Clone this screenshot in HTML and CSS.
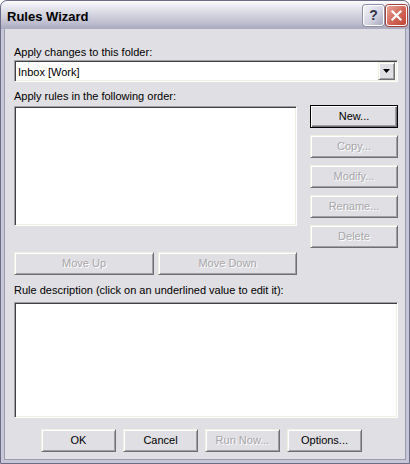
FILE: index.html
```html
<!DOCTYPE html>
<html>
<head>
<meta charset="utf-8">
<link rel="stylesheet" href="styles.css">
</head>
<body>
<div class="window">
  <div class="titlebar">
    <span class="title">Rules Wizard</span>
    <div class="caption-btns">
      <div class="cbtn help">?</div>
      <div class="cbtn close">
        <svg width="19" height="19" viewBox="0 0 19 19"><path d="M5.5 5.5 L13.5 13.5 M13.5 5.5 L5.5 13.5" stroke="#fff" stroke-width="2.2" stroke-linecap="square"/></svg>
      </div>
    </div>
  </div>
  <div class="client">
    <div class="label l1">Apply changes to this folder:</div>
    <div class="combo sunken">
      <span class="combo-text">Inbox [Work]</span>
      <div class="combo-btn">
        <svg width="7" height="4" viewBox="0 0 7 4"><path d="M0 0 H7 L3.5 4 Z" fill="#000"/></svg>
      </div>
    </div>
    <div class="label l2">Apply rules in the following order:</div>
    <div class="main">
      <div class="left">
        <div class="listbox sunken"></div>
        <div class="move-row">
          <div class="btn disabled move-up">Move Up</div>
          <div class="btn disabled move-down">Move Down</div>
        </div>
      </div>
      <div class="right-col">
        <div class="btn default">New...</div>
        <div class="btn disabled">Copy...</div>
        <div class="btn disabled">Modify...</div>
        <div class="btn disabled">Rename...</div>
        <div class="btn disabled">Delete</div>
      </div>
    </div>
    <div class="label l3">Rule description (click on an underlined value to edit it):</div>
    <div class="desc sunken"></div>
    <div class="bottom-row">
      <div class="btn wide">OK</div>
      <div class="btn wide">Cancel</div>
      <div class="btn wide disabled">Run Now...</div>
      <div class="btn wide">Options...</div>
    </div>
  </div>
</div>
</body>
</html>
```
FILE: styles.css
```css
html, body {
  margin: 0;
  padding: 0;
  background: #ffffff;
}
body {
  font-family: "Liberation Sans", Arial, sans-serif;
  font-size: 11px;
  color: #000;
}
.window {
  width: 410px;
  height: 464px;
  box-sizing: border-box;
  border: 1px solid #6c6c88;
  border-radius: 7px 7px 0 0;
  background: #c6c6d6;
  display: flex;
  flex-direction: column;
  overflow: hidden;
}
.titlebar {
  height: 28px;
  flex: none;
  display: flex;
  align-items: flex-start;
  background: linear-gradient(to bottom, #ffffff 0%, #f4f4f8 8%, #e2e2ea 30%, #cfcfdc 55%, #bdbdce 80%, #a9a9bf 100%);
  border-radius: 6px 6px 0 0;
}
.title {
  font-weight: bold;
  font-size: 13px;
  line-height: 15px;
  padding: 8px 0 0 6px;
  color: #000;
}
.caption-btns {
  margin-left: auto;
  display: flex;
  gap: 2px;
  padding: 4px 2px 0 0;
}
.cbtn {
  width: 21px;
  height: 21px;
  box-sizing: border-box;
  border: 1px solid #ffffff;
  border-radius: 3px;
  display: flex;
  align-items: center;
  justify-content: center;
}
.help {
  background: linear-gradient(to bottom right, #f4f4f9 0%, #d4d4e2 55%, #a9a9c0 100%);
  box-shadow: 0 0 0 1px #8e8ea8;
  color: #333347;
  font-weight: bold;
  font-size: 14px;
  line-height: 19px;
}
.close {
  background: linear-gradient(to bottom right, #e8a49c 0%, #d46a5c 50%, #c04434 100%);
  box-shadow: 0 0 0 1px #a0443c;
}
.client {
  flex: 1;
  margin: 0 3px 3px 3px;
  background: #e0dfe3;
  padding: 17px 8px 0 10px;
  box-shadow: inset 1px 0 0 #9b9bb0, inset -1px 0 0 #9b9bb0, inset 0 -1px 0 #9b9bb0;
}
.label {
  line-height: 13px;
  white-space: nowrap;
}
.l2 { margin-top: 8px; }
.l3 { margin-top: 9px; }
.sunken {
  box-sizing: border-box;
  background: #ffffff;
  border: 1px solid;
  border-color: #a0a0a6 #ffffff #ffffff #a0a0a6;
  box-shadow: inset 1px 1px 0 #404040, inset -1px -1px 0 #f1efe2;
}
.combo {
  margin-top: 1px;
  height: 22px;
  width: 384px;
  display: flex;
  align-items: center;
  padding: 2px 2px 2px 3px;
}
.combo-text {
  flex: 1;
  line-height: 18px;
  padding-top: 1px;
}
.combo-btn {
  width: 17px;
  height: 18px;
  box-sizing: border-box;
  background: #e0dfe3;
  border: 1px solid;
  border-color: #f1efe2 #6f6e72 #6f6e72 #f1efe2;
  box-shadow: inset 1px 1px 0 #ffffff, inset -1px -1px 0 #a09fa4;
  display: flex;
  align-items: center;
  justify-content: center;
}
.main {
  margin-top: 2px;
  display: flex;
  gap: 13px;
}
.left {
  width: 283px;
}
.listbox {
  margin-top: 1px;
  height: 120px;
}
.move-row {
  margin-top: 26px;
  display: flex;
  gap: 4px;
}
.move-up { width: 140px; }
.move-down { width: 139px; }
.right-col {
  width: 88px;
  display: flex;
  flex-direction: column;
  gap: 7px;
}
.btn {
  height: 23px;
  box-sizing: border-box;
  background: #e0dfe3;
  border: 1px solid;
  border-color: #f1efe2 #6f6e72 #6f6e72 #f1efe2;
  box-shadow: inset 1px 1px 0 #ffffff, inset -1px -1px 0 #a09fa4;
  text-align: center;
  line-height: 21px;
  white-space: nowrap;
}
.btn.default {
  border-color: #000000;
  box-shadow: inset 1px 1px 0 #ffffff, inset -1px -1px 0 #6f6e72, inset -2px -2px 0 #a09fa4;
}
.btn.disabled {
  color: #a7a6aa;
  text-shadow: 1px 1px 0 #ffffff;
}
.desc {
  margin-top: 5px;
  height: 116px;
}
.bottom-row {
  margin-top: 11px;
  padding-left: 27px;
  display: flex;
  gap: 7px;
}
.btn.wide { width: 75px; }
```
